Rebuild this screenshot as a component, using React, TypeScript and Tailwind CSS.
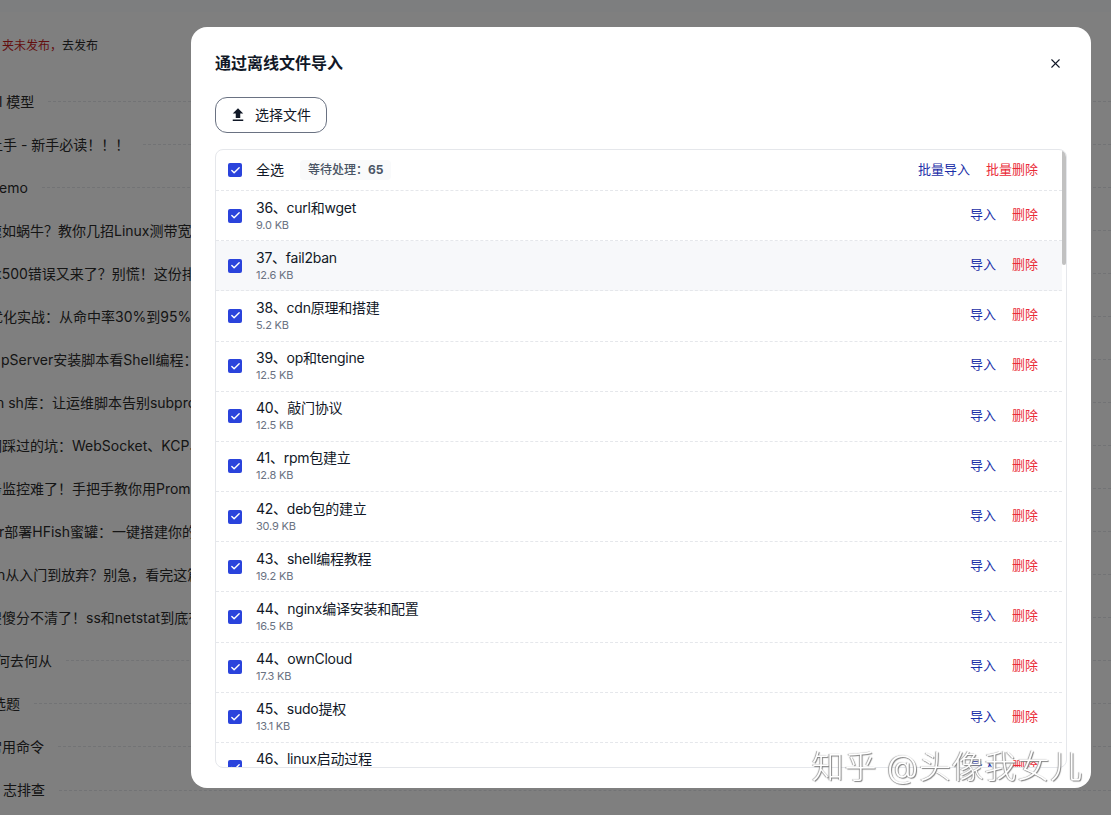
import { Check, X } from "lucide-react"
import { MdFileUpload } from "react-icons/md"

const pageRows = [
  { text: "l 模型", offset: "ml-[-1px]" },
  { text: "上手 - 新手必读！！！", offset: "ml-[-11px]" },
  { text: "Demo", offset: "ml-[-11px]" },
  { text: "速如蜗牛？教你几招Linux测带宽的方法，一看就会", offset: "ml-[-12px]" },
  { text: "x500错误又来了？别慌！这份排查指南请收好", offset: "ml-[-6px]" },
  { text: "优化实战：从命中率30%到95%的全过程记录", offset: "ml-[-11px]" },
  { text: "pServer安装脚本看Shell编程：从入门到实战", offset: "ml-[1px]" },
  { text: "n sh库：让运维脚本告别subprocess的烦恼", offset: "ml-[-4px]" },
  { text: "们踩过的坑：WebSocket、KCP、QUIC协议选型", offset: "ml-[-12px]" },
  { text: "务监控难了！手把手教你用Prometheus监控", offset: "ml-[-12px]" },
  { text: "r部署HFish蜜罐：一键搭建你的安全防线系统", offset: "ml-[-1px]" },
  { text: "n从入门到放弃？别急，看完这篇你就懂了", offset: "ml-[-3px]" },
  { text: "傻傻分不清了！ss和netstat到底有什么区别", offset: "ml-[-12px]" },
  { text: "何去何从", offset: "ml-[-4px]" },
  { text: "选题", offset: "ml-[-8px]" },
  { text: "常用命令", offset: "ml-[-12px]" },
  { text: "志排查", offset: "ml-[3px]" },
]

const files = [
  { name: "36、curl和wget", size: "9.0 KB" },
  { name: "37、fail2ban", size: "12.6 KB" },
  { name: "38、cdn原理和搭建", size: "5.2 KB" },
  { name: "39、op和tengine", size: "12.5 KB" },
  { name: "40、敲门协议", size: "12.5 KB" },
  { name: "41、rpm包建立", size: "12.8 KB" },
  { name: "42、deb包的建立", size: "30.9 KB" },
  { name: "43、shell编程教程", size: "19.2 KB" },
  { name: "44、nginx编译安装和配置", size: "16.5 KB" },
  { name: "44、ownCloud", size: "17.3 KB" },
  { name: "45、sudo提权", size: "13.1 KB" },
  { name: "46、linux启动过程", size: "11.4 KB" },
]

const Checkbox = () => (
  <span className="flex h-[14px] w-[14px] shrink-0 items-center justify-center rounded-[2px] bg-[#2a43dc]">
    <Check size={11} strokeWidth={3} className="text-white" />
  </span>
)

const BackgroundPage = () => (
  <div className="h-screen overflow-hidden bg-white text-[#2b2b2b]">
    <div className="h-3 bg-[#fbfcff]" />
    <p className="ml-[2px] mt-[24px] h-5 text-xs leading-5">
      <span className="text-[#c81e1e]">夹未发布，</span>去发布
    </p>
    <div className="mt-[24px]">
      {pageRows.map((row) => (
        <div key={row.text} className="flex h-[43.04px] items-center">
          <span className={`${row.offset} shrink-0 text-sm`}>{row.text}</span>
          <span className="ml-3.5 flex-1 border-t border-dashed border-gray-200" />
        </div>
      ))}
    </div>
  </div>
)

const FileRow = ({ name, size, hover }: { name: string; size: string; hover: boolean }) => (
  <div className={`flex h-[50.18px] shrink-0 items-center border-b border-dashed border-gray-200 pl-3 pr-6 ${hover ? "bg-[#f7f8fa]" : ""}`}>
    <Checkbox />
    <div className="ml-3.5 flex-1 pb-[1px]">
      <p className="text-sm leading-[19px] tracking-[-0.25px] text-[#111827]">{name}</p>
      <p className="text-[11px] leading-4 tracking-[-0.2px] text-gray-500">{size}</p>
    </div>
    <div className="mb-[2px] flex gap-4 text-[13px]">
      <button className="text-[#1c2fa8]">导入</button>
      <button className="text-[#ea2b38]">删除</button>
    </div>
  </div>
)

const Modal = () => (
  <div className="relative flex h-[761px] w-[900px] flex-col rounded-2xl bg-white px-6 pb-5">
    <div className="flex h-[70px] shrink-0 items-center justify-between pt-[2px]">
      <h2 className="text-base font-bold text-[#111827]">通过离线文件导入</h2>
      <button className="mr-[4px] text-[#111827]">
        <X size={15} strokeWidth={1.75} />
      </button>
    </div>
    <button className="flex h-9 w-28 shrink-0 items-center gap-2 rounded-xl border border-gray-500 pl-[13px] text-sm text-[#111827]">
      <MdFileUpload size={18} />
      选择文件
    </button>
    <div className="relative mt-4 flex w-[852px] flex-1 flex-col overflow-hidden rounded-lg border border-gray-200">
      <div className="mr-[4px] flex flex-col">
        <div className="flex h-[41px] shrink-0 items-center border-b border-dashed border-gray-200 pl-3 pr-6">
          <Checkbox />
          <span className="ml-3.5 text-sm text-[#111827]">全选</span>
          <span className="ml-4 rounded bg-gray-50 px-2 py-0.5 text-xs font-medium text-gray-600">
            等待处理：<span className="font-bold">65</span>
          </span>
          <div className="ml-auto flex gap-4 text-[13px]">
            <button className="text-[#1c2fa8]">批量导入</button>
            <button className="text-[#ea2b38]">批量删除</button>
          </div>
        </div>
        {files.map((file, i) => (
          <FileRow key={file.name} name={file.name} size={file.size} hover={i === 1} />
        ))}
      </div>
      {/* scrollbar */}
      <div className="absolute right-0 top-0 h-[115px] w-1 rounded-full bg-[#c1c1c1]" />
    </div>
    {/* watermark */}
    <div className="absolute bottom-[1px] right-[8px] whitespace-nowrap text-[32px] font-light leading-10 tracking-[0.8px] text-white [text-shadow:1px_1px_1px_#808080,-1px_0_1px_#a0a0a0]">
      知乎 @头像我女儿
    </div>
  </div>
)

export default function App() {
  return (
    <div className="font-['Inter','Noto_Sans_CJK_SC',sans-serif]">
      <BackgroundPage />
      <div className="fixed inset-0 bg-black/50 pl-[191px] pt-[27px]">
        <Modal />
      </div>
    </div>
  )
}
